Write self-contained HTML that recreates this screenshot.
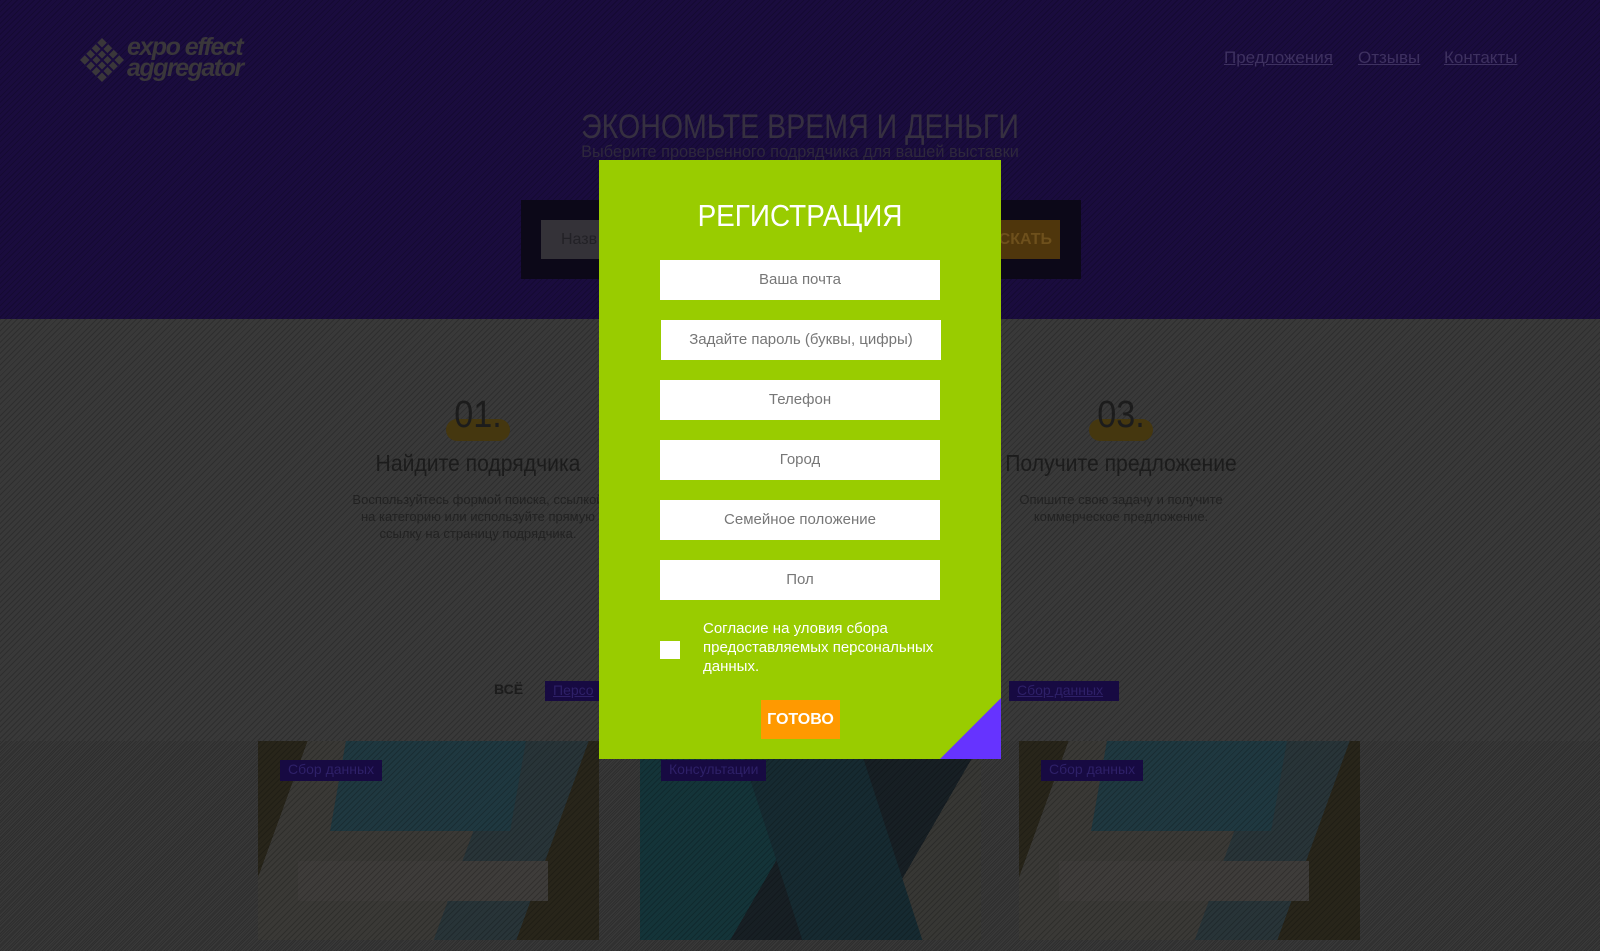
<!DOCTYPE html>
<html><head><meta charset="utf-8"><style>
*{margin:0;padding:0;box-sizing:border-box}
body{width:1600px;height:951px;overflow:hidden;position:relative;font-family:"Liberation Sans",sans-serif;background:#3a3a3a}
.hdr{position:absolute;left:0;top:0;width:1600px;height:319px;background:#1a0c3e}
.low{position:absolute;left:0;top:319px;width:1600px;height:632px;background:#393939}
.stripes{position:absolute;inset:0;background:repeating-linear-gradient(135deg,rgba(0,0,0,.2) 0 1px,transparent 1px 4px);pointer-events:none}
.abs{position:absolute}
.nav a{position:absolute;top:48px;font-size:17px;color:#3e3160;text-decoration:underline}
.h1{left:0;width:1600px;text-align:center;top:108px;font-size:34px;color:#363040;transform:scaleX(.84)}
.sub{left:0;width:1600px;text-align:center;top:142px;font-size:17px;color:#2e283c;transform:scaleX(.96)}
.card{position:absolute;top:741px;width:341px;height:199px;overflow:hidden}
.tag{position:absolute;background:#170a42;color:#2e2068;font-size:14px;padding:1px 8px;height:20px}
.modal{position:absolute;left:599px;top:160px;width:402px;height:599px;background:#99cc00;overflow:hidden}
.modal .inp{position:absolute;left:61px;width:280px;height:40px;background:#fff;color:#777;font-size:15px;text-align:center;line-height:40px}
.dk{color:#1c1c1c}
</style></head><body>
<div class="hdr"><div class="stripes"></div></div>
<div class="low"><div class="stripes"></div></div>

<svg class="abs" style="left:80px;top:38px" width="44" height="44" viewBox="0 0 44 44"><g fill="#3a373a"><path d="M22 0l22 22-22 22L0 22z"/></g><g stroke="#1a0c3e" stroke-width="2"><path d="M11 11l22 22M16.5 5.5l22 22M5.5 16.5l22 22M33 11L11 33M27.5 5.5l-22 22M38.5 16.5l-22 22"/></g></svg>
<div class="abs" style="left:127px;top:37px;font-size:25px;font-weight:bold;font-style:italic;color:#3a373a;line-height:21px;letter-spacing:-1.5px">expo effect<br>aggregator</div>

<div class="nav"><a style="left:1224px">Предложения</a><a style="left:1358px">Отзывы</a><a style="left:1444px">Контакты</a></div>
<div class="abs h1">ЭКОНОМЬТЕ ВРЕМЯ И ДЕНЬГИ</div>
<div class="abs sub">Выберите проверенного подрядчика для вашей выставки</div>
<div class="abs" style="left:521px;top:200px;width:560px;height:79px;background:#0c0818"></div>
<div class="abs" style="left:541px;top:220px;width:200px;height:39px;background:#343238;color:#222126;font-size:16px;line-height:39px;padding-left:20px">Назв</div>
<div class="abs" style="left:960px;top:220px;width:100px;height:39px;background:#4f360c;color:#6e501c;font-size:16px;line-height:39px;text-align:right;padding-right:8px;font-weight:bold">СКАТЬ</div>

<div class="abs" style="left:446px;top:419px;width:64px;height:22px;border-radius:11px;background:#45370f"></div>
<div class="abs dk" style="left:446px;top:394px;width:64px;text-align:center;font-size:38px;transform:scaleX(.9)">01.</div>
<div class="abs dk" style="left:328px;top:450px;width:300px;text-align:center;font-size:23px;transform:scaleX(.92)">Найдите подрядчика</div>
<div class="abs" style="left:338px;top:491px;width:280px;text-align:center;font-size:13px;color:#222;line-height:17px">Воспользуйтесь формой поиска, ссылкой<br>на категорию или используйте прямую<br>ссылку на страницу подрядчика.</div>
<div class="abs" style="left:1089px;top:419px;width:64px;height:22px;border-radius:11px;background:#45370f"></div>
<div class="abs dk" style="left:1089px;top:394px;width:64px;text-align:center;font-size:38px;transform:scaleX(.9)">03.</div>
<div class="abs dk" style="left:971px;top:450px;width:300px;text-align:center;font-size:23px;transform:scaleX(.92)">Получите предложение</div>
<div class="abs" style="left:981px;top:491px;width:280px;text-align:center;font-size:13px;color:#222;line-height:17px">Опишите свою задачу и получите<br>коммерческое предложение.</div>

<div class="abs dk" style="left:494px;top:681px;font-size:14px;font-weight:bold">ВСЁ</div>
<div class="tag" style="left:545px;top:681px;width:70px;text-decoration:underline">Персо</div>
<div class="tag" style="left:1009px;top:681px;width:110px;text-decoration:underline">Сбор данных</div>

<div class="card" style="left:258px;background:linear-gradient(110deg,#28251a 0 12%,#3a3936 12% 60%,#283438 60% 80%,#28251a 80%)"><div class="abs" style="left:80px;top:0;width:180px;height:90px;background:#1f3840;transform:skewX(-10deg)"></div><div class="abs" style="left:40px;top:120px;width:250px;height:40px;background:#3e3c3a"></div></div>
<div class="card" style="left:640px;background:linear-gradient(120deg,#143439 0 45%,#171f24 45% 75%,#373734 75%)"><div class="abs" style="left:130px;top:0;width:120px;height:199px;background:#162a31;transform:skewX(18deg)"></div></div>
<div class="card" style="left:1019px;background:linear-gradient(110deg,#28251a 0 12%,#3a3936 12% 60%,#283438 60% 80%,#28251a 80%)"><div class="abs" style="left:80px;top:0;width:180px;height:90px;background:#1f3840;transform:skewX(-10deg)"></div><div class="abs" style="left:40px;top:120px;width:250px;height:40px;background:#3e3c3a"></div></div>
<div class="stripes" style="top:741px;height:210px"></div>
<div class="tag" style="left:280px;top:760px;height:21px">Сбор данных</div>
<div class="tag" style="left:661px;top:760px;height:21px">Консультации</div>
<div class="tag" style="left:1041px;top:760px;height:21px">Сбор данных</div>

<div class="modal">
<div class="abs" style="left:0;width:402px;top:38px;text-align:center;font-size:31px;color:#fff;transform:scaleX(.9)">РЕГИСТРАЦИЯ</div>
<div class="inp" style="top:100px">Ваша почта</div>
<div class="inp" style="top:160px;left:62px">Задайте пароль (буквы, цифры)</div>
<div class="inp" style="top:220px">Телефон</div>
<div class="inp" style="top:280px">Город</div>
<div class="inp" style="top:340px">Семейное положение</div>
<div class="inp" style="top:400px">Пол</div>
<div class="abs" style="left:61px;top:481px;width:20px;height:18px;background:#fff"></div>
<div class="abs" style="left:104px;top:459px;width:250px;font-size:15px;line-height:19px;color:#fff">Согласие на уловия сбора предоставляемых персональных данных.</div>
<div class="abs" style="left:162px;top:540px;width:79px;height:39px;background:#ff9900;color:#fff;font-weight:bold;font-size:16px;line-height:39px;text-align:center">ГОТОВО</div>
<div class="abs" style="right:0;bottom:0;width:0;height:0;border-left:61px solid transparent;border-bottom:61px solid #6633ff"></div>
</div>
</body></html>
